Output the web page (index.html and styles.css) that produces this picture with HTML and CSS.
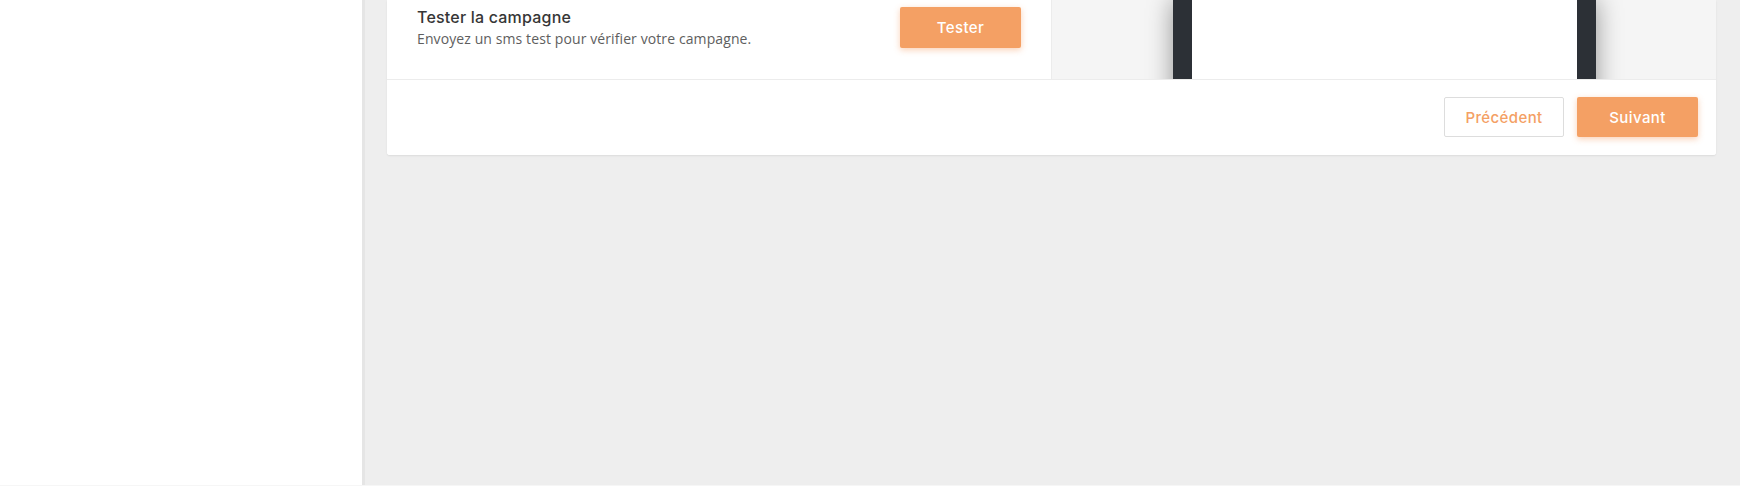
FILE: index.html
```html
<!DOCTYPE html>
<html lang="fr">
<head>
<meta charset="utf-8">
<title>Tester la campagne</title>
<link rel="stylesheet" href="styles.css">
</head>
<body>
<div class="page">
  <div class="app">
    <aside class="sidebar"></aside>
    <main class="main">
      <section class="card">
        <div class="card-body">
          <div class="left-panel">
            <div class="test-row">
              <div class="test-text">
                <h2 class="test-title">Tester la campagne</h2>
                <p class="test-desc">Envoyez un sms test pour vérifier votre campagne.</p>
              </div>
              <button class="btn btn-primary btn-test">Tester</button>
            </div>
          </div>
          <div class="right-panel">
            <div class="phone">
              <div class="phone-screen"></div>
            </div>
          </div>
        </div>
        <div class="card-footer">
          <button class="btn btn-secondary">Précédent</button>
          <button class="btn btn-primary">Suivant</button>
        </div>
      </section>
    </main>
  </div>
  <div class="bottom-line"></div>
</div>
</body>
</html>
```

FILE: styles.css
```css
* { box-sizing: border-box; }

html, body {
  margin: 0;
  padding: 0;
  height: 486px;
  overflow: hidden;
  font-family: "Open Sans", "Noto Sans", sans-serif;
  background: #eeeeee;
}

.page {
  display: flex;
  flex-direction: column;
  height: 486px;
}

.app {
  flex: 1;
  display: flex;
  min-height: 0;
}

.bottom-line {
  height: 1px;
  background: #f6f6f6;
}

.sidebar {
  width: 365px;
  flex: none;
  background: #ffffff;
  border-right: 3px solid #e5e5e5;
}

.main {
  flex: 1;
  padding: 0 24px 0 22px;
  background: #eeeeee;
}

.card {
  background: #ffffff;
  border-radius: 0 0 3px 3px;
  box-shadow: 0 1px 2px rgba(0, 0, 0, 0.08);
  overflow: hidden;
}

.card-body {
  display: grid;
  grid-template-columns: 665px 1fr;
  height: 79px;
}

.left-panel {
  border-right: 1px solid #ececec;
  padding: 7px 30px 0 30px;
}

.test-row {
  display: flex;
  justify-content: space-between;
  align-items: flex-start;
}

.test-title {
  margin: 0;
  font-family: "Inter", "Open Sans", sans-serif;
  font-size: 16px;
  font-weight: 500;
  color: #363636;
  line-height: 20px;
  letter-spacing: 0.2px;
}

.test-desc {
  margin: 3px 0 0 0;
  font-size: 14px;
  color: #5e5e5e;
  line-height: 18px;
  letter-spacing: 0.1px;
}

.btn {
  font-family: "Inter", "Open Sans", sans-serif;
  font-size: 15px;
  font-weight: 500;
  border-radius: 2px;
  width: 121px;
  height: 40px;
  cursor: pointer;
  letter-spacing: 0.4px;
}

.btn-primary {
  background: #f4a064;
  color: #ffffff;
  border: none;
  box-shadow: 0 2px 6px rgba(244, 150, 90, 0.45);
}

.btn-secondary {
  background: #ffffff;
  color: #f4a064;
  border: 1px solid #dddddd;
  width: 120px;
}

.btn-test {
  height: 41px;
}

.right-panel {
  background: #f5f5f5;
  display: flex;
  justify-content: center;
  overflow: visible;
}

.phone {
  width: 423px;
  height: 160px;
  flex: none;
  background: #2c3036;
  padding: 0 19px;
  box-shadow: 0 0 24px rgba(0, 0, 0, 0.4);
}

.phone-screen {
  height: 100%;
  background: #ffffff;
}

.card-footer {
  position: relative;
  z-index: 1;
  background: #ffffff;
  border-top: 1px solid #ececec;
  height: 76px;
  display: flex;
  justify-content: flex-end;
  align-items: flex-start;
  gap: 13px;
  padding: 17px 18px 0 0;
}
```
